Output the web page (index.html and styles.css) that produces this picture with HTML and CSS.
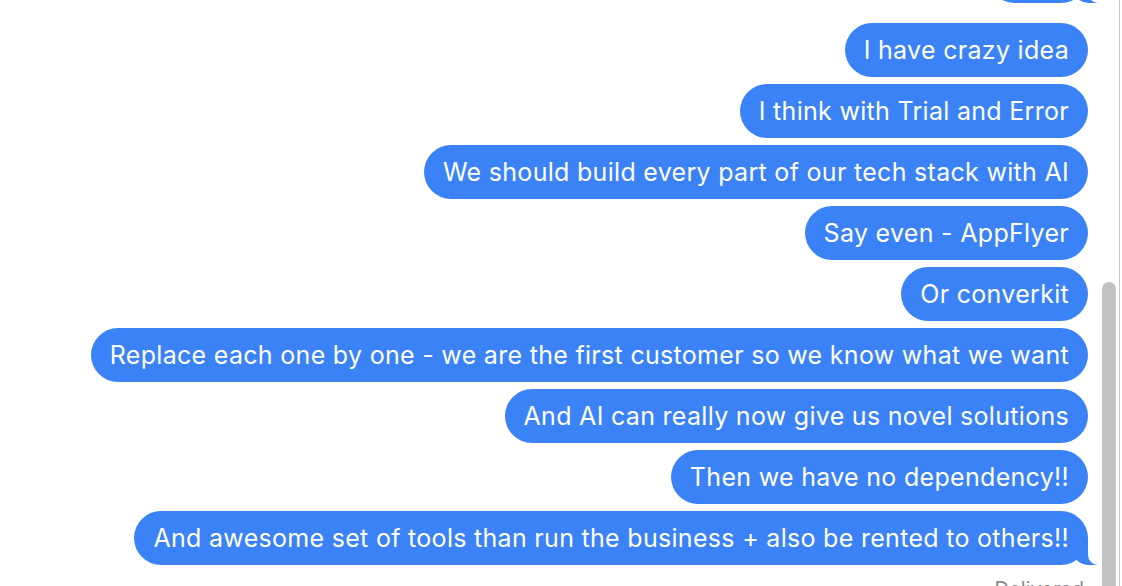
FILE: index.html
```html
<!DOCTYPE html>
<html>
<head>
<meta charset="utf-8">
<link rel="stylesheet" href="styles.css">
</head>
<body>
<div class="window">
  <div class="thread">
    <div class="group group-prev">
      <div class="bubble tail">Okay</div>
    </div>
    <div class="group">
      <div class="bubble">I have crazy idea</div>
      <div class="bubble">I think with Trial and Error</div>
      <div class="bubble">We should build every part of our tech stack with AI</div>
      <div class="bubble">Say even - AppFlyer</div>
      <div class="bubble">Or converkit</div>
      <div class="bubble">Replace each one by one - we are the first customer so we know what we want</div>
      <div class="bubble">And AI can really now give us novel solutions</div>
      <div class="bubble">Then we have no dependency!!</div>
      <div class="bubble tail">And awesome set of tools than run the business + also be rented to others!!</div>
      <div class="status">Delivered</div>
    </div>
  </div>
  <div class="scrollbar">
    <div class="thumb"></div>
    <div class="edge"></div>
  </div>
</div>
</body>
</html>
```

FILE: styles.css
```css
html, body {
  margin: 0;
  padding: 0;
  background: #ffffff;
  overflow: hidden;
}

.window {
  width: 1122px;
  height: 586px;
  display: flex;
  overflow: hidden;
  font-family: Inter, "Noto Sans", "Liberation Sans", sans-serif;
}

.thread {
  flex: 1;
  display: flex;
  flex-direction: column;
  align-items: flex-end;
  padding-right: 12px;
  margin-top: -51px;
}

.group {
  display: flex;
  flex-direction: column;
  align-items: flex-end;
  gap: 7px;
}

.group-prev {
  margin-bottom: 20px;
}

.bubble {
  position: relative;
  background: #3a82f6;
  color: #ffffff;
  font-size: 25px;
  line-height: 30px;
  padding: 12px 19px 12px 19px;
  border-radius: 27px;
  white-space: nowrap;
  letter-spacing: 0.3px;
}

.tail::before {
  content: "";
  position: absolute;
  bottom: 0;
  right: -9px;
  width: 24px;
  height: 26px;
  background: #3a82f6;
  border-bottom-left-radius: 16px 14px;
}

.tail::after {
  content: "";
  position: absolute;
  bottom: 0;
  right: -11px;
  width: 11px;
  height: 28px;
  background: #ffffff;
  border-bottom-left-radius: 10px;
}

.status {
  margin-top: 5px;
  font-size: 20px;
  line-height: 24px;
  color: #8a8a8e;
  padding-right: 4px;
}

.scrollbar {
  width: 22px;
  flex: none;
  display: flex;
  padding-top: 282px;
  box-sizing: border-box;
}

.thumb {
  margin-left: 2px;
  width: 14px;
  height: 400px;
  background: #c1c1c1;
  border-radius: 7px 7px 0 0;
}

.edge {
  margin-left: 3px;
  margin-top: -282px;
  width: 1px;
  height: 586px;
  background: #c8c8c8;
}
```
